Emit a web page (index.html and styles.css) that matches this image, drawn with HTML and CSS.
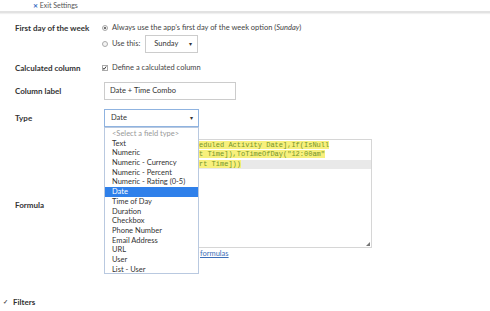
FILE: index.html
```html
<!DOCTYPE html>
<html>
<head>
<meta charset="utf-8">
<link rel="stylesheet" href="styles.css">
</head>
<body>
<div class="topbar">
  <a class="exit"><span class="x">&#x2715;</span> Exit Settings</a>
</div>
<div class="content">
  <div class="row row-week">
    <div class="label">First day of the week</div>
    <div class="control">
      <div class="line"><span class="radio on"></span><span>Always use the app&#8217;s first day of the week option (<i>Sunday</i>)</span></div>
      <div class="line line2"><span class="radio"></span><span>Use this:</span>
        <div class="select sel-day"><span>Sunday</span><span class="caret">&#9662;</span></div>
      </div>
    </div>
  </div>
  <div class="row row-calc">
    <div class="label">Calculated column</div>
    <div class="control"><div class="line"><span class="check"><svg viewBox="0 0 6 6" width="6" height="6"><path d="M1 3.2 L2.5 4.6 L5 1.2" fill="none" stroke="#333" stroke-width="1.2"/></svg></span><span>Define a calculated column</span></div></div>
  </div>
  <div class="row row-colname">
    <div class="label">Column label</div>
    <div class="control"><div class="input">Date + Time Combo</div></div>
  </div>
  <div class="row row-type">
    <div class="label">Type</div>
    <div class="control type-wrap">
      <div class="select sel-type"><span>Date</span><span class="caret">&#9662;</span></div>
      <ul class="menu">
        <li class="ph">&lt;Select a field type&gt;</li>
        <li>Text</li>
        <li>Numeric</li>
        <li>Numeric - Currency</li>
        <li>Numeric - Percent</li>
        <li>Numeric - Rating (0-5)</li>
        <li class="sel">Date</li>
        <li>Time of Day</li>
        <li>Duration</li>
        <li>Checkbox</li>
        <li>Phone Number</li>
        <li>Email Address</li>
        <li>URL</li>
        <li>User</li>
        <li>List - User</li>
      </ul>
    </div>
  </div>
  <div class="row row-formula">
    <div class="label formula-label">Formula</div>
    <div class="control">
      <div class="editor">
        <div class="cl"><span class="hl">eduled Activity Date],If(IsNull</span></div>
        <div class="cl"><span class="hl">t Time]),ToTimeOfDay("12:00am"</span></div>
        <div class="cl cur"><span class="hl">rt Time]))</span></div>
        <span class="grip"></span>
      </div>
      <div class="help"><span class="hidden-link"></span><a>formulas</a></div>
    </div>
  </div>
  <div class="filters"><span class="chev">&#10003;</span><span>Filters</span></div>
</div>
</body>
</html>
```
FILE: styles.css
```css
* { box-sizing: border-box; }
body { margin: 0; font-family: Lato, "Open Sans", sans-serif; color: #333; background: #fff; }
.topbar { height: 13px; padding-left: 33px; border-bottom: 2px solid #e2e2e2; box-shadow: 0 1px 1px #f0f0f0; }
.exit { font-size: 7px; line-height: 11px; color: #555; display: block; }
.exit .x { color: #3a6fc4; font-size: 6px; font-weight: bold; }
.content { padding: 10px 0 0 15px; position: relative; }
.row { display: grid; grid-template-columns: 89px 300px; }
.label { font-size: 8px; font-weight: 700; line-height: 10px; color: #333; }
.control { font-size: 7.5px; line-height: 10px; color: #444; }
.line { display: flex; align-items: center; height: 10px; }
.line2 { height: 18px; margin-top: 2px; }
.radio { width: 6px; height: 6px; border-radius: 50%; border: 1px solid #aaa; background: #f4f4f4; margin: 0 4px 0 -2px; flex: none; position: relative; }
.radio.on::after { content: ""; position: absolute; left: 1px; top: 1px; width: 2px; height: 2px; border-radius: 50%; background: #444; }
.check { width: 6px; height: 6px; border: 1px solid #aaa; margin: 0 4px 0 -2px; flex: none; display: flex; background: #fff; }
.check svg { margin: -1px 0 0 -1px; }
.select { display: flex; align-items: center; justify-content: space-between; height: 18px; border: 1px solid #ccc; background: #fff; font-size: 7.5px; color: #333; }
.caret { font-size: 6px; color: #333; }
.sel-day { width: 53px; margin-left: 5px; padding: 0 5px 0 8px; }
.row-calc { margin-top: 10px; }
.row-colname { margin-top: 9px; }
.row-colname .label, .row-type .label { line-height: 18px; }
.input { width: 132px; height: 18px; border: 1px solid #ccc; padding-left: 5px; line-height: 16px; font-size: 7.5px; color: #333; }
.row-type { margin-top: 9px; }
.type-wrap { position: relative; }
.sel-type { width: 95px; padding: 0 5px 0 6px; border-color: #8fb3e0; }
.menu { position: absolute; left: 0; top: 18px; width: 95px; height: 147px; margin: 0; padding: 1px 0 0; list-style: none; background: #fff; border: 1px solid #b9c9e0; z-index: 2; }
.menu li { height: 9.7px; line-height: 9.7px; font-size: 7.5px; padding-left: 7px; color: #333; }
.menu li.ph { color: #999; }
.menu li.sel { background: #2f80ea; color: #fff; }
.row-formula { margin-top: 12px; }
.formula-label { padding-top: 61px; }
.editor { position: relative; width: 268px; height: 109px; border: 1px solid #d6d6d6; padding: 1px 0 0 0; font-family: "Liberation Mono", monospace; font-size: 7px; }
.cl { height: 9.3px; line-height: 9.3px; white-space: pre; padding-left: 94px; }
.cl.cur { background: #e9e9e9; }
.hl { background: #f7f07c; color: #74952a; }
.grip { position: absolute; right: 1px; bottom: 1px; width: 0; height: 0; border-left: 4px solid transparent; border-bottom: 4px solid #777; }
.help { font-size: 7.5px; line-height: 10px; margin-top: 1px; display: flex; }
.hidden-link { width: 96px; }
.help a { color: #3d6fb8; text-decoration: underline; }
.filters { margin: 38px 0 0 -12px; display: flex; align-items: center; font-size: 8px; font-weight: 700; line-height: 10px; color: #333; }
.chev { font-size: 6px; margin-right: 5px; color: #555; }
```
